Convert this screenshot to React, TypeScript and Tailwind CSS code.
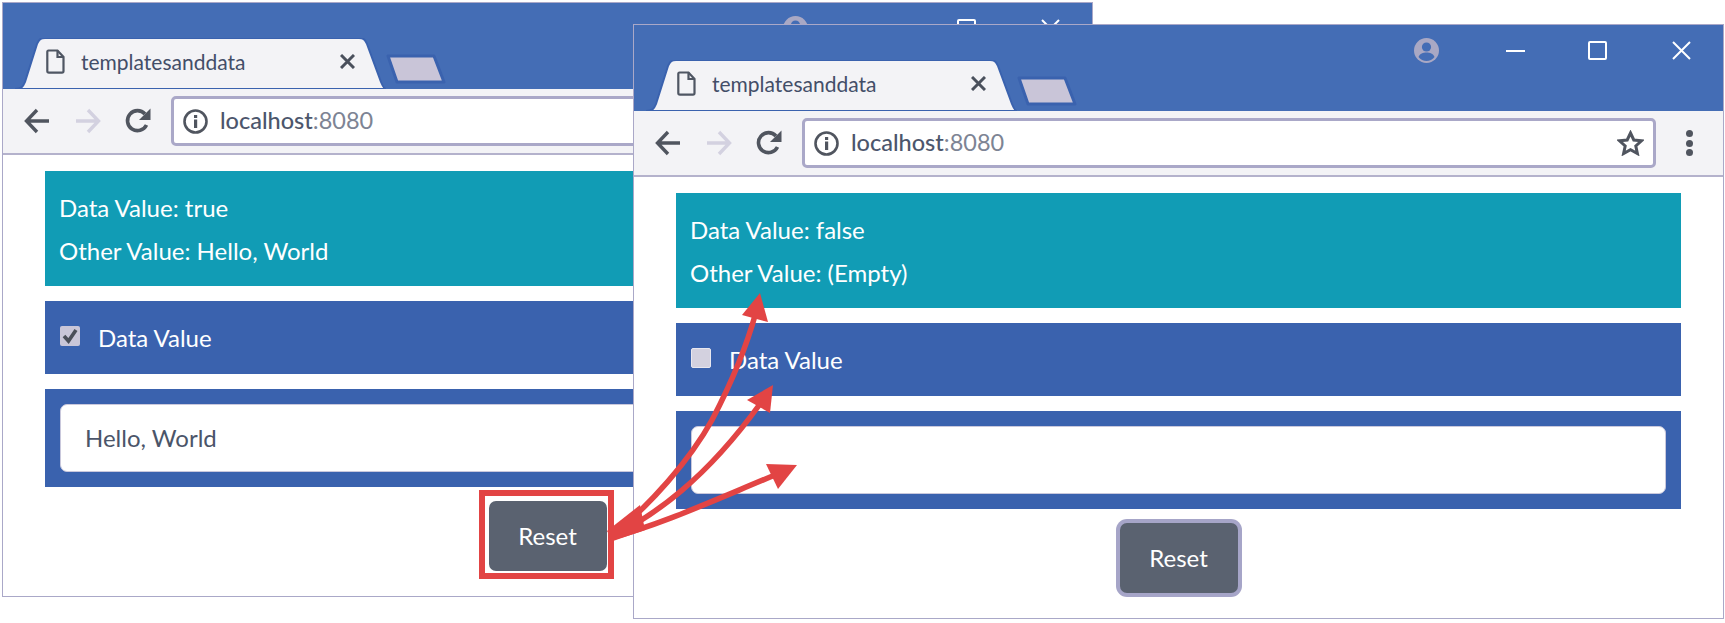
import React from "react";

const FONT = "[font-family:Lato,'Open_Sans',sans-serif]";

function BrowserWindow({
  className,
  checked,
  first,
  second,
  inputValue,
  focused,
}: {
  className: string;
  checked: boolean;
  first: string;
  second: string;
  inputValue: string;
  focused: boolean;
}) {
  return (
    <div className={`absolute w-[1091px] h-[595px] box-border border border-[#aaa8c8] bg-white flex flex-col ${className}`}>
      <div className="h-[86px] bg-[#446db5] flex justify-between items-start shrink-0">
        <div className="flex items-end h-full pl-[12px]">
          <div className="relative w-[371px] h-[51px] flex items-center pl-[31px] pr-[31px] pb-[4px]">
            <svg className="absolute inset-0" width="371" height="51" viewBox="0 0 371 51">
              <path d="M0 51 C6 51 8 49 10 44 L22 6 C24 1 26 0 30 0 L344 0 C348 0 350 1 352 6 L366 44 C368 49 370 51 371 51 Z" fill="#f3f3f6" stroke="#3a62ae" strokeWidth="2" />
            </svg>
            <svg className="relative shrink-0" width="19" height="25" viewBox="0 0 19 25" fill="none" stroke="#4f5663" strokeWidth="2.2">
              <path d="M2.5 1.5H11.5L17.5 8V22C17.5 23 16.8 23.7 16 23.7H3C2 23.7 1.3 23 1.3 22V3C1.3 2 1.8 1.5 2.5 1.5Z" />
              <path d="M11.5 1.5V8H17.5" />
            </svg>
            <span className={`relative ml-[16px] text-[21px] text-[#434e68] ${FONT}`}>templatesanddata</span>
            <svg className="relative ml-auto shrink-0" width="15" height="15" viewBox="0 0 15 15" stroke="#4a505c" strokeWidth="3">
              <path d="M1 1L14 14M14 1L1 14" />
            </svg>
          </div>
          <svg className="ml-[-2px] mb-[4px]" width="64" height="32" viewBox="0 0 64 32">
            <path d="M4 3H50L60 29H13Z" fill="#c9c5d8" stroke="#3a62ae" strokeWidth="3" strokeLinejoin="round" />
          </svg>
        </div>
        <div className="flex items-center h-[25px] mt-[13px] pr-[32px]">
          <svg width="25" height="25" viewBox="0 0 25 25">
            <circle cx="12.5" cy="12.5" r="12.5" fill="#a9a8c4" />
            <circle cx="12.5" cy="9" r="4.6" fill="#446db5" />
            <path d="M4.5 19C6 15.5 9 14.5 12.5 14.5S19 15.5 20.5 19C18.5 21.5 15.5 23 12.5 23S6.5 21.5 4.5 19Z" fill="#446db5" />
          </svg>
          <div className="ml-[67px] w-[19px] h-[2px] bg-white" />
          <div className="ml-[63px] w-[19px] h-[19px] border-2 border-white rounded-[2px]" />
          <svg className="ml-[65px]" width="19" height="19" viewBox="0 0 19 19" stroke="#fff" strokeWidth="2">
            <path d="M1 1L18 18M18 1L1 18" />
          </svg>
        </div>
      </div>
      <div className="h-[66px] shrink-0 bg-[#f3f3f6] border-b-2 border-[#b4b2cc] flex items-center pl-[21px]">
        <svg width="26" height="26" viewBox="0 0 26 26" fill="none" stroke="#50555f" strokeWidth="3.4">
          <path d="M25 13H3M13 2L2.5 13L13 24" />
        </svg>
        <svg className="ml-[25px]" width="26" height="26" viewBox="0 0 26 26" fill="none" stroke="#d3d1e0" strokeWidth="3.4">
          <path d="M1 13H23M13 2L23.5 13L13 24" />
        </svg>
        <svg className="ml-[24px]" width="26" height="26" viewBox="0 0 26 26" fill="none">
          <path d="M21.5 17A10 10 0 1 1 20 6" stroke="#50555f" strokeWidth="3.6" />
          <path d="M25.5 0.5V12H14Z" fill="#50555f" />
        </svg>
        <div className="ml-[20px] flex-1 h-[50px] bg-white border-[3px] border-[#aaa8c8] rounded-[5px] flex items-center pl-[9px] pr-[9px]">
          <svg width="25" height="25" viewBox="0 0 25 25" fill="none">
            <circle cx="12.5" cy="12.5" r="11" stroke="#50555f" strokeWidth="2.6" />
            <rect x="11" y="10.5" width="3.2" height="8.5" fill="#50555f" />
            <rect x="11" y="6" width="3.2" height="3" fill="#50555f" />
          </svg>
          <span className={`ml-[12px] text-[23.5px] text-[#4c566c] font-medium ${FONT}`}>
            localhost<span className="text-[#7d8494] font-normal">:8080</span>
          </span>
          <svg className="ml-auto" width="27" height="26" viewBox="0 0 27 26" fill="none" stroke="#50555f" strokeWidth="3" strokeLinejoin="miter">
            <path d="M13.5 3L16.8 10L24.5 10.8L18.8 16L20.4 23.5L13.5 19.6L6.6 23.5L8.2 16L2.5 10.8L10.2 10Z" />
          </svg>
        </div>
        <div className="w-[67px] flex flex-col items-center gap-[2.5px]">
          <div className="w-[7px] h-[7px] rounded-full bg-[#50555f]" />
          <div className="w-[7px] h-[7px] rounded-full bg-[#50555f]" />
          <div className="w-[7px] h-[7px] rounded-full bg-[#50555f]" />
        </div>
      </div>
      <div className={`flex-1 flex flex-col items-center px-[42px] pt-[16px] ${FONT}`}>
        <div className="w-full h-[115px] bg-[#119cb5] text-white text-[24px] leading-[43px] px-[14px] py-[15px]">
          <div>{first}</div>
          <div>{second}</div>
        </div>
        <div className="w-full h-[73px] mt-[15px] bg-[#3a62ae] text-white text-[24px] flex items-center px-[15px]">
          {checked ? (
            <svg width="20" height="20" viewBox="0 0 20 20" className="mb-[3px]">
              <rect width="20" height="20" rx="2" fill="#c9c6d8" />
              <path d="M4 10L8.5 15L16 4" fill="none" stroke="#4a4e58" strokeWidth="3.6" />
            </svg>
          ) : (
            <div className="w-[20px] h-[20px] mb-[3px] rounded-[2px] bg-[#d3d1df] border border-[#e8e7ef]" />
          )}
          <span className="ml-[18px]">Data Value</span>
        </div>
        <div className="w-full h-[98px] mt-[15px] bg-[#3a62ae] px-[15px] py-[15px]">
          <div className="h-[68px] bg-white border border-[#c9c8dc] rounded-[7px] flex items-center pl-[24px] text-[24px] text-[#4b5569]">
            {inputValue}
          </div>
        </div>
        <div
          className={`w-[118px] h-[70px] mt-[14px] bg-[#5a6270] rounded-[7px] text-white text-[24px] flex items-center justify-center ${
            focused ? "ring-[4px] ring-[#a6a5c8]" : ""
          }`}
        >
          Reset
        </div>
      </div>
    </div>
  );
}

export default function App() {
  return (
    <div className="relative w-[1725px] h-[623px] bg-white overflow-hidden">
      <BrowserWindow
        className="left-[2px] top-[2px]"
        checked
        first="Data Value: true"
        second="Other Value: Hello, World"
        inputValue="Hello, World"
        focused={false}
      />
      <BrowserWindow
        className="left-[633px] top-[24px]"
        checked={false}
        first="Data Value: false"
        second="Other Value: (Empty)"
        inputValue=""
        focused
      />
      <svg className="absolute inset-0 pointer-events-none" width="1725" height="623" viewBox="0 0 1725 623">
        <rect x="482" y="493" width="129" height="83" fill="none" stroke="#e24444" strokeWidth="6" />
        <g fill="none" stroke="#e24444" strokeWidth="5.5">
          <path d="M610 538C650 505 690 460 712 420C733 380 747 345 756 312" />
          <path d="M610 538C655 515 705 480 760 404" />
          <path d="M610 538C660 525 710 502 775 475" />
        </g>
        <g fill="#e24444">
          <path d="M760 293L742 315L768 322Z" />
          <path d="M773 385L747 400L770 413Z" />
          <path d="M797 465L766 464L778 489Z" />
          <path d="M607 531L640 505L645 530L613 541Z" />
        </g>
      </svg>
    </div>
  );
}
